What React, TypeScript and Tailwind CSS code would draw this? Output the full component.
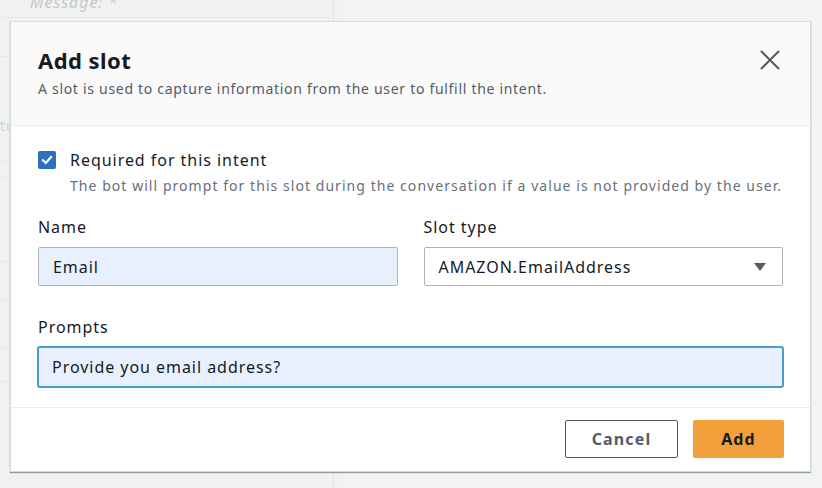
export default function App() {
  return (
    <div
      className="relative w-[822px] h-[488px] overflow-hidden bg-[#f0f1f1] text-[#16191f] tracking-[0.06em]"
      style={{ fontFamily: '"Noto Sans", "Open Sans", sans-serif' }}
    >
      {/* page behind the dialog */}
      <div className="flex h-full">
        <div className="w-[334px] h-full border-r border-[#e4e6e6] flex flex-col">
          <div className="h-[28px] border-b border-[#e6e8e8] px-[30px] -mt-[10px]">
            <span className="italic text-[16px] text-[#c5c9c9]">Message: *</span>
          </div>
          <div className="h-[39px] border-b border-[#e6e8e8]" />
          <div className="h-[105px] border-b border-[#e6e8e8] pt-[58px] text-[14px] text-[#cfd3d3]">tu</div>
          <div className="h-[16px] border-b border-[#e6e8e8]" />
          <div className="h-[84px] border-b border-[#e6e8e8]" />
          <div className="h-[38px] border-b border-[#e6e8e8]" />
          <div className="h-[48px] border-b border-[#e6e8e8]" />
          <div className="h-[34px] border-b border-[#e6e8e8]" />
        </div>
        <div className="w-[8px] h-full" />
        <div className="flex-1 h-full bg-[#f2f3f3]" />
      </div>

      {/* dialog */}
      <div className="absolute left-[10px] top-[21px] w-[801px] h-[451px] bg-white border border-[#d5dbdb] shadow-[0_1px_1px_rgba(0,28,36,0.4)] flex flex-col">
        <div className="bg-[#fafafa] h-[104px] border-b border-[#eaeded] px-[27px] pt-[24px] flex justify-between">
          <div>
            <div className="text-[22px] leading-[28px] font-bold tracking-[0.02em] text-[#16191f]">Add slot</div>
            <div className="mt-[5px] text-[14px] leading-[20px] tracking-[0.05em] text-[#545b64]">
              A slot is used to capture information from the user to fulfill the intent.
            </div>
          </div>
          <button className="h-[22px] w-[22px] mt-[3px] mr-[2px] flex items-center justify-center text-[#545b64]">
            <svg width="20" height="20" viewBox="0 0 20 20" fill="none">
              <path d="M1.5 1.5 L18.5 18.5 M18.5 1.5 L1.5 18.5" stroke="currentColor" strokeWidth="2" strokeLinecap="round" />
            </svg>
          </button>
        </div>

        <div className="px-[27px] pt-[22px] pb-[19px] border-b border-[#eaeded]">
          <div className="flex gap-[14px]">
            <div className="mt-[3px] w-[18px] h-[18px] rounded-[2px] bg-[#2e6fc0] flex items-center justify-center shrink-0">
              <svg width="12" height="12" viewBox="0 0 12 12" fill="none">
                <path d="M2 6.3 L4.8 9 L10 3" stroke="white" strokeWidth="2.2" strokeLinecap="square" />
              </svg>
            </div>
            <div>
              <div className="text-[16px] leading-[24px] text-[#16191f]">Required for this intent</div>
              <div className="mt-[4px] text-[14px] leading-[20px] tracking-[0.075em] text-[#687078] whitespace-nowrap">
                The bot will prompt for this slot during the conversation if a value is not provided by the user.
              </div>
            </div>
          </div>

          <div className="mt-[19px] grid grid-cols-2 gap-[26px]">
            <div>
              <div className="text-[16px] leading-[24px]">Name</div>
              <div className="mt-[8px] h-[39px] rounded-[2px] border border-[#aab7b8] bg-[#e8f0fe] px-[14px] flex items-center text-[16px]">
                Email
              </div>
            </div>
            <div>
              <div className="text-[16px] leading-[24px]">Slot type</div>
              <div className="mt-[8px] h-[39px] rounded-[2px] border border-[#aab7b8] bg-white pl-[14px] pr-[15px] flex items-center justify-between text-[16px]">
                <span>AMAZON.EmailAddress</span>
                <svg width="14" height="10" viewBox="0 0 14 10">
                  <path d="M1 1 H13 L7 9 Z" fill="#545b64" />
                </svg>
              </div>
            </div>
          </div>

          <div className="mt-[29px] text-[16px] leading-[24px]">Prompts</div>
          <div className="mt-[7px] -mx-[1px] h-[42px] rounded-[3px] border-2 border-[#4a9ccd] bg-[#e8f0fe] px-[13px] flex items-center text-[16px]">
            Provide you email address?
          </div>
        </div>

        <div className="flex-1 flex justify-end items-start gap-[15px] pt-[12px] pr-[26px]">
          <button className="h-[38px] w-[113px] rounded-[2px] border border-[#545b64] bg-white text-[16px] font-bold tracking-[0.07em] text-[#545b64]">
            Cancel
          </button>
          <button className="h-[38px] w-[91px] rounded-[2px] bg-[#f2a03a] text-[16px] font-bold tracking-[0.07em] text-[#16191f]">
            Add
          </button>
        </div>
      </div>
    </div>
  );
}
